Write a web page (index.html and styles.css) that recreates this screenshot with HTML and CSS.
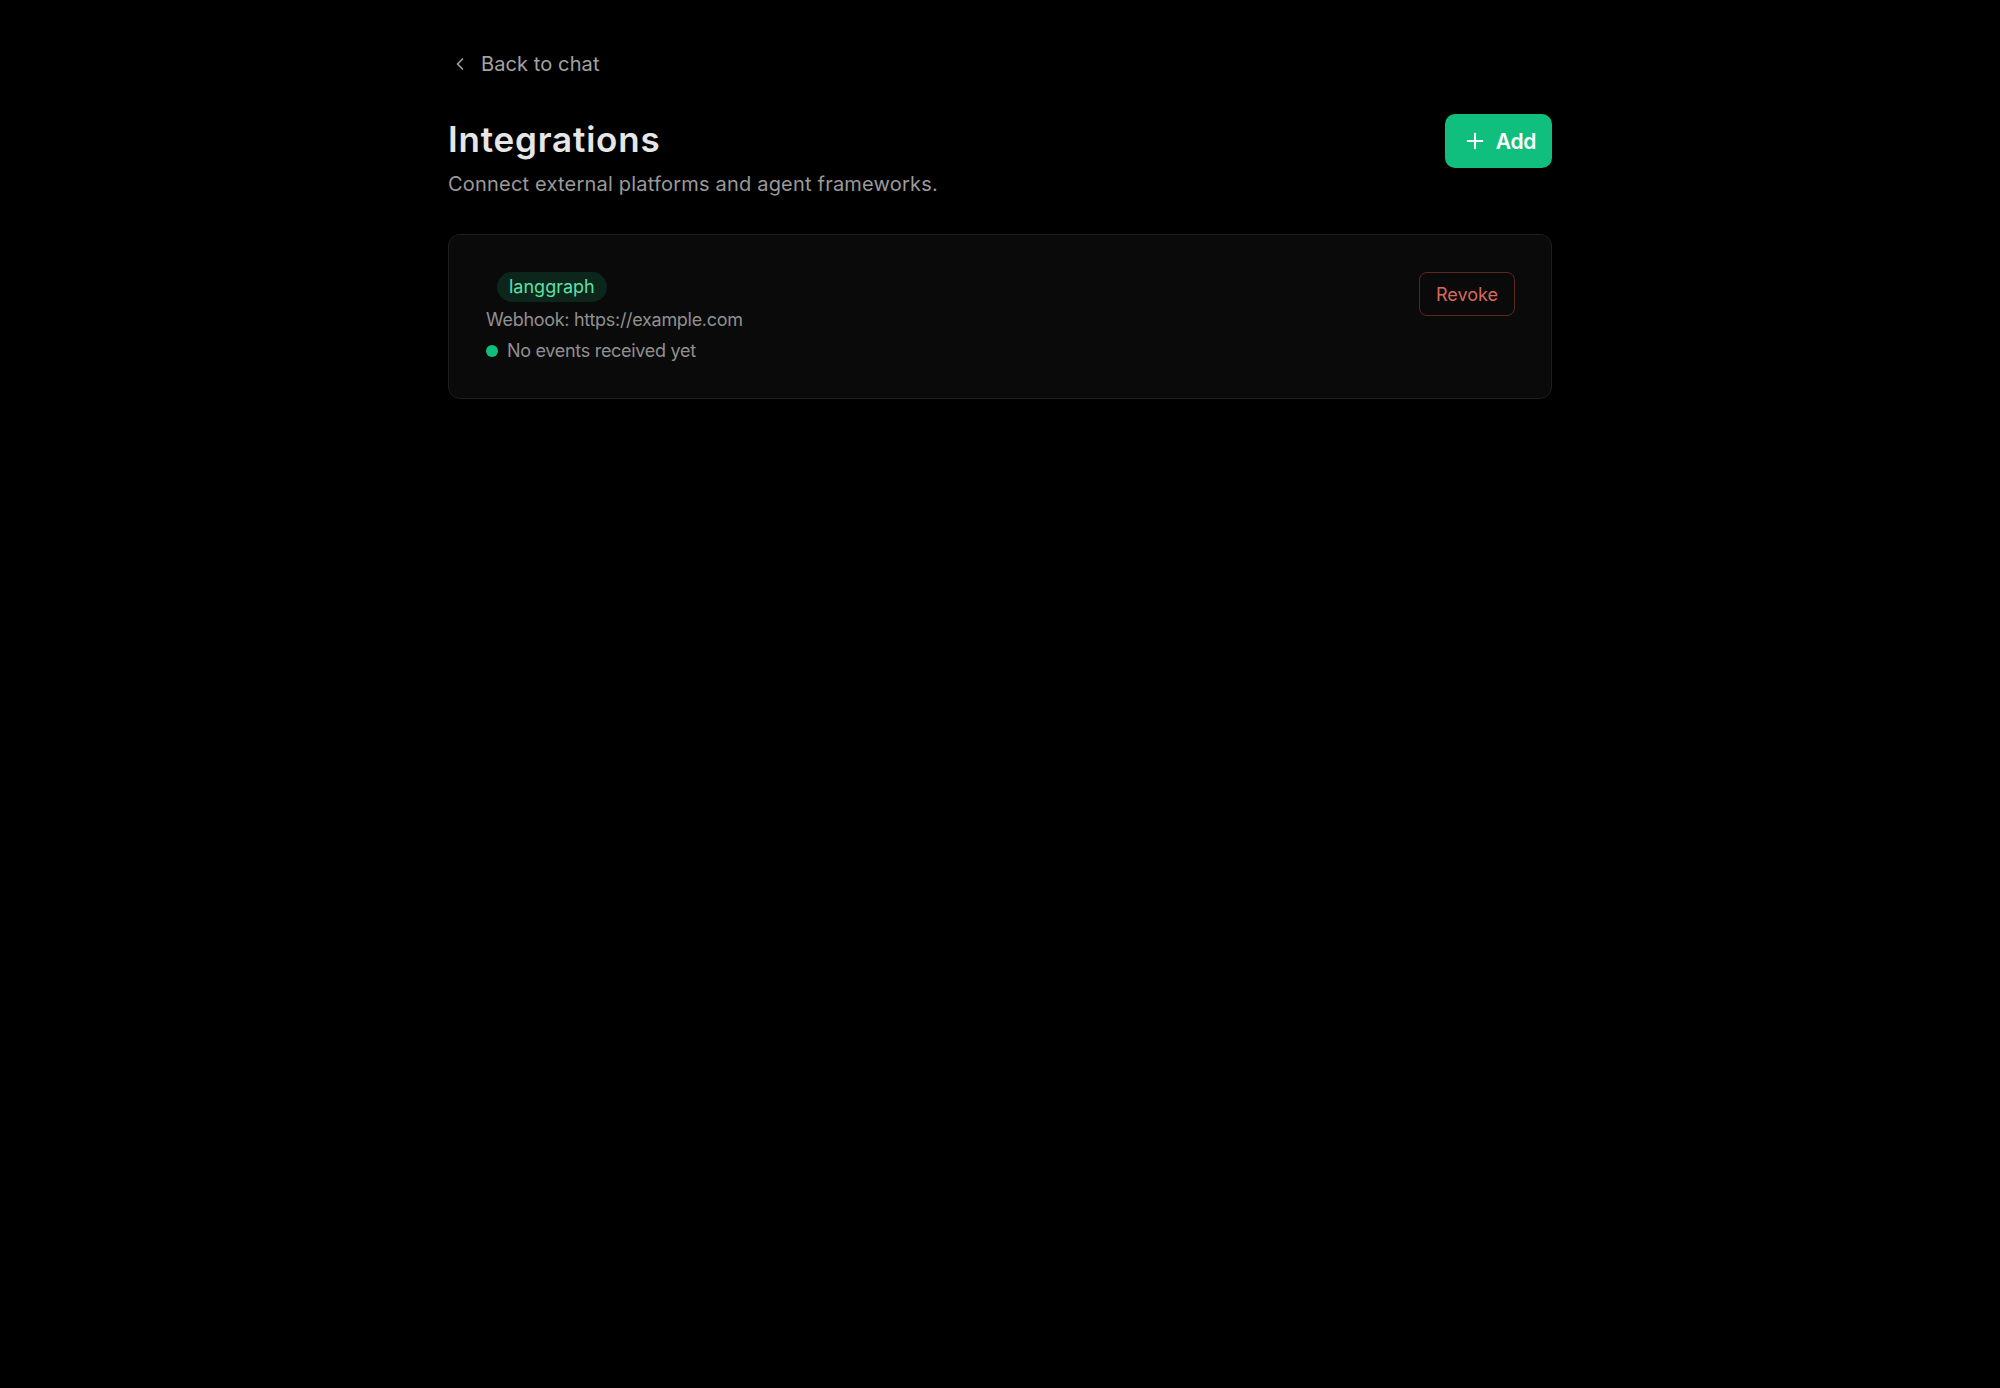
FILE: index.html
```html
<!DOCTYPE html>
<html lang="en">
<head>
<meta charset="utf-8">
<title>Integrations</title>
<link rel="stylesheet" href="styles.css">
</head>
<body>
<main class="page">
  <a class="back" href="#">
    <svg class="back-icon" viewBox="0 0 24 24" width="20" height="20" fill="none" stroke="currentColor" stroke-width="2" stroke-linecap="round" stroke-linejoin="round"><path d="M15 18l-6-6 6-6"/></svg>
    <span>Back to chat</span>
  </a>
  <header class="header">
    <div class="titles">
      <h1 class="title">Integrations</h1>
      <p class="subtitle">Connect external platforms and agent frameworks.</p>
    </div>
    <button class="add-btn" type="button">
      <svg viewBox="0 0 24 24" width="22" height="22" fill="none" stroke="currentColor" stroke-width="2.2" stroke-linecap="round"><path d="M12 4v16M4 12h16"/></svg>
      <span>Add</span>
    </button>
  </header>
  <section class="card">
    <div class="card-body">
      <div class="badge-row"><span class="badge">langgraph</span></div>
      <div class="webhook">Webhook: https://example.com</div>
      <div class="status"><span class="dot"></span><span>No events received yet</span></div>
    </div>
    <button class="revoke" type="button">Revoke</button>
  </section>
</main>
</body>
</html>
```
FILE: styles.css
```css
* { box-sizing: border-box; }
html, body { margin: 0; padding: 0; background: #000; }
body {
  font-family: Inter, "Noto Sans", "Liberation Sans", sans-serif;
  color: #e8e8e8;
  min-height: 1388px;
}
.page {
  width: 1104px;
  margin: 0 auto;
  padding-top: 48px;
}
.back {
  display: inline-flex;
  align-items: center;
  gap: 11px;
  color: #a3a3a3;
  text-decoration: none;
  font-size: 20px;
  line-height: 32px;
  letter-spacing: 0.1px;
}
.back-icon { margin-left: 2px; }
.header {
  display: flex;
  justify-content: space-between;
  align-items: flex-start;
  margin-top: 34px;
}
.title {
  margin: 3px 0 0;
  font-size: 35px;
  line-height: 44px;
  font-weight: 600;
  color: #e6e6e6;
  letter-spacing: 0.8px;
}
.subtitle {
  margin: 9px 0 0;
  font-size: 20px;
  line-height: 28px;
  color: #9a9a9a;
  letter-spacing: 0.2px;
}
.add-btn {
  display: inline-flex;
  align-items: center;
  gap: 10px;
  height: 54px;
  padding: 0 16px 0 19px;
  border: none;
  border-radius: 10px;
  background: #10bf7e;
  color: #fff;
  font-family: inherit;
  font-size: 21px;
  font-weight: 600;
  letter-spacing: -0.3px;
}
.card {
  margin-top: 36px;
  display: flex;
  justify-content: space-between;
  align-items: flex-start;
  padding: 37px 36px 34px 37px;
  background: #0a0a0a;
  border: 1px solid #1f1f1f;
  border-radius: 12px;
}
.card-body {
  display: flex;
  flex-direction: column;
  gap: 5px;
}
.badge-row { padding-left: 11px; }
.badge {
  display: inline-block;
  height: 30px;
  padding: 0 12px;
  border-radius: 15px;
  background: #0c261c;
  color: #5ee0a6;
  font-size: 18px;
  line-height: 30px;
}
.webhook, .status {
  font-size: 18px;
  line-height: 26px;
  color: #909090;
  letter-spacing: -0.3px;
}
.status {
  display: flex;
  align-items: center;
  gap: 9px;
}
.dot {
  width: 12px;
  height: 12px;
  border-radius: 50%;
  background: #10bf7e;
}
.revoke {
  height: 44px;
  padding: 0 16px;
  background: transparent;
  border: 1.5px solid #5a2724;
  border-radius: 8px;
  color: #d8685d;
  font-family: inherit;
  font-size: 18px;
}
```
